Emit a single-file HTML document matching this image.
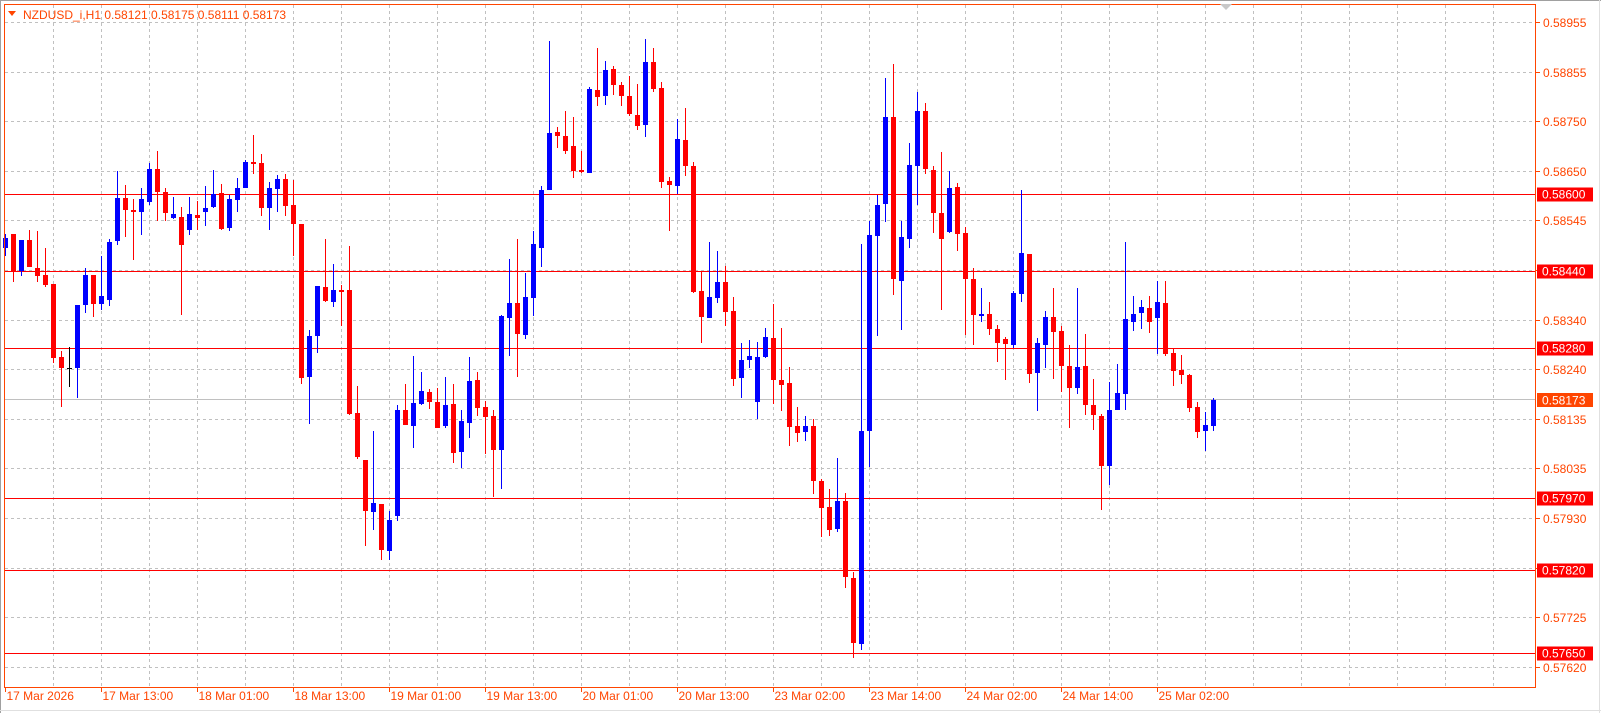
<!DOCTYPE html>
<html><head><meta charset="utf-8">
<style>
html,body{margin:0;padding:0;background:#fff;}
body{width:1601px;height:713px;overflow:hidden;position:relative;font-family:"Liberation Sans",sans-serif;}
svg{position:absolute;left:0;top:0;}
</style></head>
<body>
<svg id="c" width="1601" height="713" xmlns="http://www.w3.org/2000/svg" font-family="Liberation Sans, sans-serif" font-size="12">
<rect x="0" y="0" width="1601" height="713" fill="#fff"/>
<line x1="0.5" y1="0" x2="0.5" y2="713" stroke="#a0a0a0" stroke-width="1"/>
<line x1="0" y1="0.5" x2="1601" y2="0.5" stroke="#a0a0a0" stroke-width="1"/>
<line x1="1599.5" y1="0" x2="1599.5" y2="713" stroke="#e0e0e0"/>
<line x1="0" y1="710.5" x2="1601" y2="710.5" stroke="#e0e0e0"/>
<g id="grid" stroke="#c0c0c0" stroke-width="1" stroke-dasharray="3,3"></g>
<g id="levels"></g>
<g id="candles"></g>
<rect x="4.5" y="4.5" width="1531" height="683" fill="none" stroke="#ff4500" stroke-width="1"/>
<g id="axis" fill="#ff4500"></g>
<polygon points="1220,4 1232,4 1226,10" fill="#c8c8c8"/>
<polygon points="8,11 16,11 12,16" fill="#ff4500"/>
<text x="23" y="19" fill="#ff4500" font-size="12">NZDUSD_i,H1  0.58121 0.58175 0.58111 0.58173</text>
</svg>
<script>
var NS="http://www.w3.org/2000/svg";
function el(p,t,a,txt){var e=document.createElementNS(NS,t);for(var k in a)e.setAttribute(k,a[k]);if(txt!==undefined)e.textContent=txt;document.getElementById(p).appendChild(e);return e;}
// vertical grid
for(var k=1;k<=31;k++){var x=5+48*k+0.5;el("grid","line",{x1:x,y1:5,x2:x,y2:687});}
var labels=["0.58955","0.58855","0.58750","0.58650","0.58545","0.58440","0.58340","0.58240","0.58135","0.58035","0.57930","0.57830","0.57725","0.57620"];
for(var i=0;i<14;i++){var y=Math.round(22+i*49.6)+0.5;el("grid","line",{x1:5,y1:y,x2:1535,y2:y});
 el("axis","line",{x1:1535,y1:y,x2:1540,y2:y,stroke:"#ff4500"});
 el("axis","text",{x:1543,y:y+4.5},labels[i]);}
var times=["17 Mar 2026","17 Mar 13:00","18 Mar 01:00","18 Mar 13:00","19 Mar 01:00","19 Mar 13:00","20 Mar 01:00","20 Mar 13:00","23 Mar 02:00","23 Mar 14:00","24 Mar 02:00","24 Mar 14:00","25 Mar 02:00"];
for(var i=0;i<13;i++){var x=5+96*i+0.5;el("axis","line",{x1:x,y1:687,x2:x,y2:692,stroke:"#ff4500"});el("axis","text",{x:x+1,y:700},times[i]);}
// current price line
el("levels","line",{x1:5,y1:399.5,x2:1535,y2:399.5,stroke:"#c0c0c0"});
var lv=[[193.5,"0.58600"],[270.8,"0.58440"],[348,"0.58280"],[497.9,"0.57970"],[570.4,"0.57820"],[652.5,"0.57650"]];
lv.forEach(function(l){var y=Math.round(l[0])+0.5;el("levels","line",{x1:5,y1:y,x2:1535,y2:y,stroke:"#ff0000"});});
var D="b 238 248 234 256|r 234 271 234 282|b 240 271 240 276|r 240 267 230 267|r 268 276 231 282|r 275 285 248 287|r 284 358 284 363|r 357 368 351 407|k 368 369 347 387|b 305 368 305 398|b 275 305 268 313|r 275 304 275 317|b 296 304 256 310|b 242 300 239 306|b 198 241 171 245|r 198 210 185 237|r 210 212 199 260|b 199 212 188 235|b 169 202 163 205|r 169 192 151 221|r 192 213 188 221|b 214 218 197 219|r 217 245 207 315|b 214 230 197 235|r 215 218 201 230|"+
"b 208 212 186 226|b 194 207 170 208|r 193 229 184 230|b 199 228 195 231|b 188 200 178 212|b 162 188 160 188|r 162 164 135 174|r 163 208 154 216|b 188 208 182 230|b 179 189 175 212|r 179 206 174 216|r 205 224 180 256|r 224 378 224 384|b 336 377 330 424|b 286 336 286 353|r 287 301 239 302|b 290 302 264 307|r 290 292 285 326|r 290 414 246 415|r 413 457 386 459|r 460 511 460 546|b 503 512 431 530|r 504 550 504 560|b 520 551 511 560|b 410 516 405 521|"+
"r 410 425 384 425|b 403 426 356 448|b 391 404 372 405|r 392 402 389 409|r 402 428 388 428|b 405 426 377 428|r 404 453 384 463|b 421 452 410 468|b 381 423 357 438|r 380 408 372 416|r 407 417 401 454|r 416 450 410 497|b 316 450 315 489|b 303 318 259 356|r 303 334 239 377|b 297 335 273 339|b 244 298 231 316|b 190 248 186 267|b 133 190 41 190|r 132 136 127 148|r 136 151 111 154|r 146 171 117 178|r 170 172 151 173|b 89 173 87 173|r 90 97 48 106|"+
"b 70 96 61 105|r 69 85 66 95|r 85 96 82 106|r 96 114 76 116|r 115 126 84 130|b 62 125 39 137|r 62 89 48 92|r 88 182 82 188|r 181 185 177 231|b 139 186 119 194|r 140 166 108 176|r 166 292 162 293|r 291 317 272 343|b 297 318 242 318|b 282 298 251 303|r 282 312 266 326|r 311 379 297 386|b 360 378 343 398|b 356 360 340 368|b 357 402 342 419|b 337 357 328 358|r 338 380 304 404|r 380 385 328 411|r 383 427 367 446|r 426 433 407 442|"+
"b 426 432 416 441|r 426 481 419 494|r 481 508 479 537|r 507 530 489 536|b 501 529 458 532|r 501 577 493 588|r 578 643 572 658|b 431 644 244 650|b 235 431 221 467|b 205 236 195 336|b 117 204 78 222|r 117 279 64 295|b 237 281 221 330|b 165 239 143 248|b 111 166 92 205|r 111 169 103 174|r 170 213 166 233|r 213 239 152 310|b 188 232 171 233|r 187 234 183 251|r 233 279 227 335|r 279 315 268 345|b 314 316 288 322|r 314 329 302 335|r 329 343 325 362|"+
"r 339 344 337 380|b 293 345 291 348|b 253 294 190 302|r 254 374 254 383|b 343 373 338 411|b 317 345 311 368|r 317 332 288 379|r 331 366 326 392|r 366 388 345 428|b 367 388 288 394|r 366 405 334 415|r 405 415 379 430|r 416 466 414 510|b 410 466 382 485|b 393 410 364 410|b 319 394 242 410|b 314 322 296 331|b 307 313 300 329|r 308 322 296 333|b 302 318 281 354|r 303 354 281 356|r 353 371 349 386|r 370 375 355 384|r 375 408 374 412|r 407 432 402 438|b 425 431 412 451|b 400 426 398 431";
var col={b:"#0000ff",r:"#ff0000",k:"#000000"};
D.split("|").forEach(function(s,i){var p=s.split(" ");var c=col[p[0]];var t=+p[1],b=+p[2],h=+p[3],l=+p[4];var x=5+8*i;
 el("candles","line",{x1:x+0.5,y1:h,x2:x+0.5,y2:l,stroke:c,"stroke-width":1});
 if(p[0]=="k"){el("candles","line",{x1:x-2,y1:t+0.5,x2:x+3,y2:t+0.5,stroke:c});}
 else el("candles","rect",{x:x-2,y:t,width:5,height:Math.max(1,b-t),fill:c});});
// level boxes
lv.forEach(function(l){var y=Math.round(l[0]);el("axis","rect",{x:1537,y:y-6.5,width:56,height:14,fill:"#ff0000"});el("axis","text",{x:1542,y:y+4.5,fill:"#ffffff"},l[1]);});
el("axis","rect",{x:1537,y:393,width:56,height:14,fill:"#ff4500"});el("axis","text",{x:1542,y:404.5,fill:"#ffffff"},"0.58173");
</script>
</body></html>
